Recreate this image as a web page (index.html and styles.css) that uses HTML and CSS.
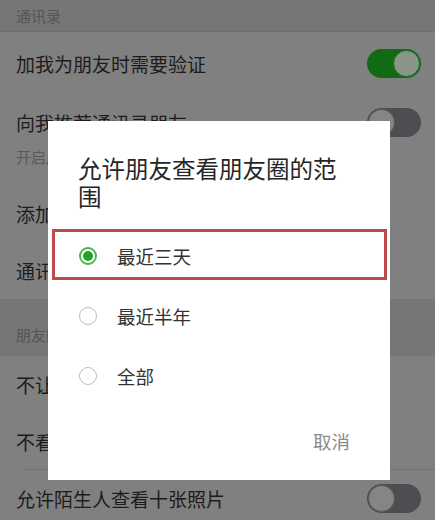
FILE: index.html
```html
<!DOCTYPE html>
<html lang="zh-CN">
  <head>
    <meta charset="utf-8" />
    <title>朋友权限</title>
    <meta name="viewport" content="width=device-width, initial-scale=1" />
    <link rel="stylesheet" href="styles.css">
  </head>
  <body>
    <div class="settings">
      <div class="section-title top">通讯录</div>
      <div class="row first">
        <span class="label">加我为朋友时需要验证</span>
        <span class="switch on"></span>
      </div>
      <div class="row with-sub">
        <div class="row-main">
          <span class="label">向我推荐通讯录朋友</span>
          <span class="switch"></span>
        </div>
        <p class="sub">开启后，为你推荐已经开通微信的手机联系人</p>
      </div>
      <div class="row"><span class="label">添加我的方式</span></div>
      <div class="row"><span class="label">通讯录黑名单</span></div>
      <div class="section-title">朋友圈</div>
      <div class="row"><span class="label">不让他（她）看我的朋友圈</span></div>
      <div class="row divided"><span class="label">不看他（她）的朋友圈</span></div>
      <div class="row">
        <span class="label">允许陌生人查看十张照片</span>
        <span class="switch"></span>
      </div>
    </div>

    <div class="dialog">
      <h2 class="dialog-title">允许朋友查看朋友圈的范围</h2>
      <ul class="options">
        <li class="option checked marked">
          <span class="radio"></span>
          <span>最近三天</span>
        </li>
        <li class="option">
          <span class="radio"></span>
          <span>最近半年</span>
        </li>
        <li class="option">
          <span class="radio"></span>
          <span>全部</span>
        </li>
      </ul>
      <div class="dialog-footer">
        <span class="cancel">取消</span>
      </div>
    </div>
  </body>
</html>
```

FILE: styles.css
```css
body {
  margin: 0;
  width: 435px;
  height: 520px;
  overflow: hidden;
  position: relative;
  background: #808080;
  font-family: 'Noto Sans CJK SC', 'Noto Sans', sans-serif;
}
.settings {
  display: flex;
  flex-direction: column;
}
.section-title {
  background: #767676;
  color: #555;
  font-size: 15px;
  padding: 0 16px;
  height: 57px;
  display: flex;
  align-items: flex-end;
  padding-bottom: 11px;
  box-sizing: border-box;
}
.section-title.top {
  height: 32px;
  align-items: center;
  padding-bottom: 0;
  border-bottom: 1px solid #6e6e6e;
}
.row {
  height: 57px;
  padding: 0 14px 0 16px;
  display: flex;
  align-items: center;
  justify-content: space-between;
  color: #1c1c1c;
  font-size: 19px;
}
.row.first {
  height: 63px;
}
.row.with-sub {
  height: 90px;
  flex-direction: column;
  align-items: stretch;
  justify-content: flex-start;
}
.row-main {
  display: flex;
  align-items: center;
  justify-content: space-between;
  padding-top: 13px;
}
.sub {
  margin: 9px 0 0;
  font-size: 15px;
  color: #5a5a5a;
}
.row.divided {
  background: linear-gradient(#727272, #727272) no-repeat 24px 100% / calc(100% - 24px) 1px;
}
.switch {
  width: 54px;
  height: 29px;
  border-radius: 15px;
  background: #4e4e52;
  position: relative;
  box-sizing: border-box;
}
.switch::after {
  content: '';
  position: absolute;
  left: 1px;
  top: 1px;
  width: 27px;
  height: 27px;
  border-radius: 50%;
  background: #858585;
  box-sizing: border-box;
  border: 1px solid #5a5a5a;
}
.switch.on {
  background: #136a14;
}
.switch.on::after {
  left: auto;
  right: 1px;
  background: #8a9487;
  border-color: #1e6e1e;
}
.dialog {
  position: absolute;
  left: 48px;
  top: 121px;
  width: 342px;
  height: 359px;
  background: #fff;
  display: flex;
  flex-direction: column;
}
.dialog-title {
  margin: 0;
  padding: 33px 46px 0 30px;
  font-size: 23.5px;
  font-weight: 400;
  line-height: 28px;
  color: #262626;
}
.options {
  list-style: none;
  margin: 16px 0 0;
  padding: 0;
}
.option {
  height: 60px;
  display: flex;
  align-items: center;
  gap: 20px;
  padding-left: 31px;
  font-size: 18.5px;
  color: #333;
  position: relative;
}
.option.marked::after {
  content: '';
  position: absolute;
  left: 4px;
  right: 3px;
  top: 3px;
  bottom: 6px;
  border: 3px solid #c0494c;
}
.radio {
  width: 18px;
  height: 18px;
  border-radius: 50%;
  border: 1.5px solid #bdbdbd;
  box-sizing: border-box;
  position: relative;
}
.option.checked .radio {
  border: 2px solid #4cb34f;
}
.option.checked .radio::after {
  content: '';
  position: absolute;
  left: 2px;
  top: 2px;
  width: 10px;
  height: 10px;
  border-radius: 50%;
  background: #24a32b;
}
.dialog-footer {
  display: flex;
  justify-content: flex-end;
  padding: 24px 40px 0;
}
.cancel {
  font-size: 18.5px;
  color: #8a8a8a;
  line-height: 22px;
}
```
